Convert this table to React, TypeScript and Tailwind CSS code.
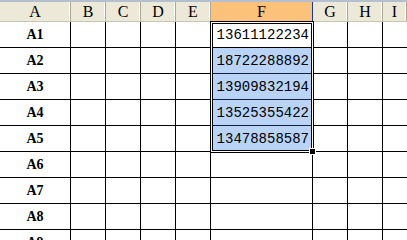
import React from 'react';

const cols = ['A', 'B', 'C', 'D', 'E', 'F', 'G', 'H', 'I'];
const phones = ['13611122234', '18722288892', '13909832194', '13525355422', '13478858587'];
const rows = ['A1', 'A2', 'A3', 'A4', 'A5', 'A6', 'A7', 'A8', 'A9'];

const App: React.FC = () => {
  return (
    <div className="relative w-[407px] h-[240px] overflow-hidden bg-white text-black">
      {/* thin strip above the column headers */}
      <div className="h-[2px] bg-[#b4bfcf]" />

      <div className="grid grid-cols-[71px_35px_35px_35px_35px_102px_35px_35px_1fr]">
        {/* column header row */}
        {cols.map((c) => (
          <div
            key={c}
            className={
              c === 'F'
                ? "h-[20px] flex items-center justify-center bg-[#fcc27c] border-r border-b border-r-[#1f3a8a] border-b-[#1f3a8a] font-[family-name:'Liberation_Serif',serif] text-[16px] leading-none"
                : "h-[20px] flex items-center justify-center bg-[#ece9d8] border-r border-b border-r-[#aca899] border-b-[#c9c6b6] shadow-[inset_-1px_0_0_#ffffff] font-[family-name:'Liberation_Serif',serif] text-[16px] leading-none"
            }
          >
            {c}
          </div>
        ))}

        {/* body rows */}
        {rows.map((label, r) => (
          <React.Fragment key={label}>
            <div className="h-[26px] flex items-center justify-center border-r border-b border-black font-[family-name:'Liberation_Serif',serif] font-bold text-[14px] leading-none">
              {label}
            </div>
            <div className="h-[26px] border-r border-b border-black" />
            <div className="h-[26px] border-r border-b border-black" />
            <div className="h-[26px] border-r border-b border-black" />
            <div className="h-[26px] border-r border-b border-black" />
            <div
              className={
                r === 0
                  ? "h-[26px] flex items-center justify-end pr-[3px] bg-white border-r border-b border-black font-[family-name:'Liberation_Mono',monospace] text-[14px] leading-none"
                  : r < 5
                  ? "h-[26px] flex items-center justify-end pr-[3px] bg-[#b9d4f6] border-r border-b border-[#14213d] font-[family-name:'Liberation_Mono',monospace] text-[14px] leading-none"
                  : 'h-[26px] border-r border-b border-black'
              }
            >
              {r < 5 ? phones[r] : null}
            </div>
            <div className="h-[26px] border-r border-b border-black" />
            <div className="h-[26px] border-r border-b border-black" />
            <div className="h-[26px] border-b border-black" />
          </React.Fragment>
        ))}
      </div>

      {/* selection frame over F1:F5 */}
      <div className="absolute left-[210px] top-[21px] w-[104px] h-[132px] border border-black shadow-[inset_0_0_0_1px_#ffffff,inset_0_0_0_2px_#000000] pointer-events-none" />
      {/* fill handle */}
      <div className="absolute left-[310px] top-[149px] w-[5px] h-[5px] bg-black outline outline-1 outline-white" />
    </div>
  );
};

export default App;
